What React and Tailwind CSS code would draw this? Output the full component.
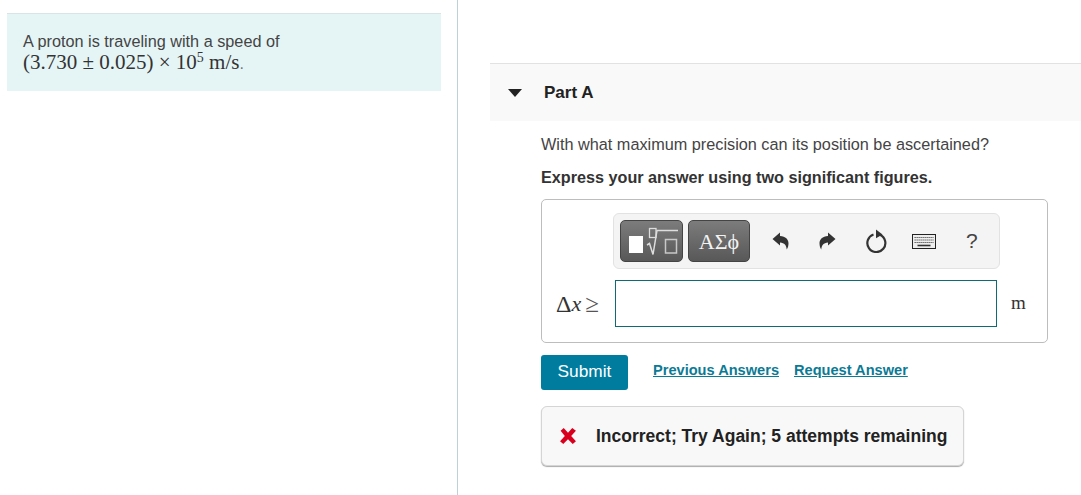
import React from 'react';

const serif = "font-['Liberation_Serif',serif]";

const TemplateIcon = () => (
  <svg width="61" height="40" viewBox="0 0 61 40" fill="none">
    <rect x="8" y="15" width="14" height="17" fill="#fff" />
    <rect x="28.500" y="7.500" width="6.500" height="9" stroke="#ddd" strokeWidth="1.300" />
    <path d="M26 24l2.500 -1.500 3.500 11 4 -24h21" stroke="#ddd" strokeWidth="1.500" />
    <rect x="44.500" y="18.500" width="11" height="13.500" stroke="#c8c8c8" strokeWidth="1.500" />
  </svg>
);

const UndoIcon = ({ flip }) => (
  <svg width="17" height="18" viewBox="0 0 17 18" className={flip ? '-scale-x-100' : ''}>
    <path d="M0.500 7L8 0.500V4c5.500 .3 8.700 3.500 8.500 7.500-.1 2.500-.7 4.500-1.800 6-.3-4-2.200-6.700-6.700-7V13.500z" fill="#333" />
  </svg>
);

const ResetIcon = () => (
  <svg width="22" height="24" viewBox="0 0 22 24" fill="none">
    <path d="M7.500 5.500a9 9 0 1 0 6.500 .3" stroke="#333" strokeWidth="2.200" />
    <path d="M10 0.500l6.500 5 -6.500 3.800z" fill="#333" />
  </svg>
);

const KeyboardIcon = () => (
  <svg width="24" height="15" viewBox="0 0 24 15" fill="none">
    <rect x="0.500" y="0.500" width="23" height="14" fill="#eee" stroke="#222" />
    <path d="M2.500 3.500h19M2.500 6h19M2.500 8.500h19" stroke="#555" strokeWidth="1.200" strokeDasharray="1.300 .7" />
    <path d="M5.500 11.500h13" stroke="#333" strokeWidth="1.600" />
  </svg>
);

const App = () => {
  return (
    <div className="flex h-[495px] w-[1081px] overflow-hidden bg-white font-['Liberation_Sans',sans-serif] text-[#333]">
      {/* Left column */}
      <div className="w-[458px] shrink-0 border-r border-[#bdd0dc] pl-[7px] pt-[13px]">
        <div className="h-[78px] w-[434px] border-t border-[#d9e5e5] bg-[#e5f5f6] pl-4 pt-[18px]">
          <p className="text-[16.250px] leading-[18px] text-[#444]">A proton is traveling with a speed of</p>
          <p className={`${serif} mt-[2px] text-[21px] leading-[20px] text-[#333]`}>
            (3.730 ± 0.025) × 10<sup className="text-[14px]">5</sup> m/s<span className="font-['Liberation_Sans',sans-serif] text-[16px] text-[#777]">.</span>
          </p>
        </div>
      </div>

      {/* Right column */}
      <div className="min-w-0 flex-1 pl-8 pt-[63px]">
        <div className="flex h-[58px] items-center border-t border-[#e2e2e2] bg-[#f9f9f9]">
          <div className="ml-[18px] h-0 w-0 border-x-[7px] border-t-[8px] border-x-transparent border-t-[#222]"></div>
          <h2 className="ml-[22px] text-[17px] font-bold text-[#222]">Part A</h2>
        </div>

        <div className="ml-[51px] w-[507px]">
          <p className="mt-[13px] text-[16.250px] leading-5 text-[#444]">With what maximum precision can its position be ascertained?</p>
          <p className="mt-[13px] text-[16.200px] font-bold leading-5 text-[#333]">Express your answer using two significant figures.</p>

          {/* Answer box */}
          <div className="mt-3 h-[144px] rounded-[5px] border border-[#bdbdbd] pt-[13px]">
            <div className="ml-[71px] flex h-[56px] w-[387px] items-center rounded-[6px] border border-[#e2e2e2] bg-[#f4f4f4] pl-[6px]">
              <button className="h-[42px] w-[63px] rounded-[5px] border border-[#444] bg-gradient-to-b from-[#7c7c7c] to-[#585858]">
                <TemplateIcon />
              </button>
              <button className={`${serif} ml-[5px] h-[42px] w-[62px] rounded-[5px] border border-[#444] bg-gradient-to-b from-[#7c7c7c] to-[#585858] text-[22px] text-[#f2f2f2]`}>
                ΑΣϕ
              </button>
              <div className="ml-[22px]"><UndoIcon /></div>
              <div className="ml-[30px]"><UndoIcon flip /></div>
              <div className="ml-[30px]"><ResetIcon /></div>
              <div className="ml-[24px]"><KeyboardIcon /></div>
              <span className="ml-[30px] text-[21px] text-[#444]">?</span>
            </div>

            <div className="mt-[11px] flex items-center">
              <span className={`${serif} ml-[14px] flex w-[59px] items-center text-[22px] text-[#333]`}>
                <span className="text-[24px]">Δ</span><i>x</i><span className="ml-1 text-[25px] text-[#555]">≥</span>
              </span>
              <input className="h-[47px] w-[382px] border border-[#0f6a78] bg-white outline-none" />
              <span className={`${serif} ml-[14px] text-[19px] text-[#333]`}>m</span>
            </div>
          </div>

          {/* Actions */}
          <div className="mt-3 flex items-center">
            <button className="h-[35px] w-[87px] rounded-[3px] bg-[#007c9e] pb-[2px] text-[17.300px] text-white">Submit</button>
            <a className="mb-[3px] ml-[25px] text-[14.600px] font-bold text-[#0b7a94] underline">Previous Answers</a>
            <a className="mb-[3px] ml-[15px] text-[14.600px] font-bold text-[#0b7a94] underline">Request Answer</a>
          </div>

          {/* Feedback */}
          <div className="mt-4 flex h-[60px] w-[423px] items-center rounded-[6px] border border-[#d5d5d5] bg-[#f8f8f8] shadow-[0_1px_1px_#aaa]">
            <svg className="ml-[16px]" width="20" height="18" viewBox="0 0 18 17">
              <path d="M2 3.500L5 1l4 4.500L13 1l3.500 2.500-4.500 5 4.500 5L13.500 16 9 11.500 4.500 16 1.500 13.500l4.500-5z" fill="#d9001e" />
            </svg>
            <span className="ml-[18px] pt-px text-[17.500px] font-bold text-[#222]">Incorrect; Try Again; 5 attempts remaining</span>
          </div>
        </div>
      </div>
    </div>
  );
};

export default App;
